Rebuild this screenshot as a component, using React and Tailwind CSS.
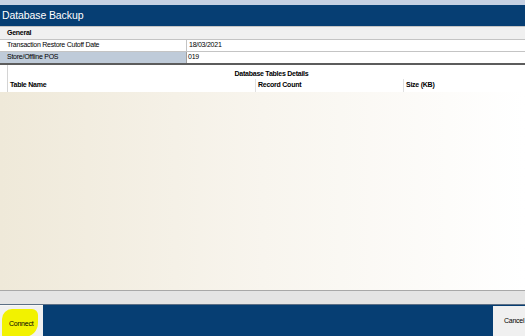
export default function App() {
  const font = { fontFamily: '"Liberation Sans", Arial, sans-serif' };
  return (
    <div className="w-[525px] h-[336px] flex flex-col overflow-hidden bg-white text-black tracking-[-0.25px]" style={font}>
      <div className="h-[5px] bg-[#c6d1e3]" />
      <div className="h-[21px] bg-[#063e73] text-white text-[10.5px] flex items-center pl-[2px] tracking-[-0.1px]">
        Database Backup
      </div>
      <div className="h-[14px] bg-[#f0f0f0] border-t border-b border-[#c4c4c4] flex items-center pl-[7px] text-[7px] font-bold">
        General
      </div>
      <div className="h-[12px] flex border-b border-[#c4c4c4] text-[7px]">
        <div className="w-[186px] pl-[7px] flex items-center">Transaction Restore Cutoff Date</div>
        <div className="flex-1 border-l border-[#c4c4c4] pl-[2px] flex items-center">18/03/2021</div>
      </div>
      <div className="h-[13px] flex border-b-2 border-[#5c5c5c] text-[7px]">
        <div className="w-[186px] pl-[7px] flex items-center bg-[#bfcbd9]">Store/Offline POS</div>
        <div className="flex-1 border-l border-[#a0a0a0] pl-[1px] flex items-center">019</div>
      </div>
      <div className="ml-[7px] border-l border-[#d4d4d4] h-[27px] flex flex-col text-[7px] font-bold">
        <div className="h-[14px] flex items-end justify-center pl-[10px]">Database Tables Details</div>
        <div className="h-[13px] grid grid-cols-[247px_148px_1fr] items-center">
          <div className="pl-[2px]">Table Name</div>
          <div className="h-full flex items-center border-l border-[#e0e0e0] pl-[2px]">Record Count</div>
          <div className="h-full flex items-center border-l border-[#e0e0e0] pl-[2px]">Size (KB)</div>
        </div>
      </div>
      <div className="flex-1 bg-gradient-to-r from-[#efe9d9] via-[#f8f5ee] to-white" />
      <div className="h-[13px] bg-[#e4e4e4] border-t border-[#a8a8a8] box-content" />
      <div className="h-[32px] bg-[#063e73] border-t border-[#5c6f85] flex justify-between">
        <div className="relative w-[43px] h-full bg-[#f0f0f0] border-t border-[#f8f8f8]">
          <div className="absolute left-[2px] top-[3px] w-[36px] h-[28px] bg-[#f2f200] rounded-tl-[10px] rounded-tr-[6px] rounded-br-[14px] rounded-bl-[2px]" />
          <div className="absolute left-[9px] top-[13px] text-[7px]">Connect</div>
        </div>
        <div className="w-[32px] h-full mt-[1px] bg-[#f0f0f0] flex items-center pl-[11px] text-[7px] whitespace-nowrap">
          Cancel
        </div>
      </div>
    </div>
  );
}
